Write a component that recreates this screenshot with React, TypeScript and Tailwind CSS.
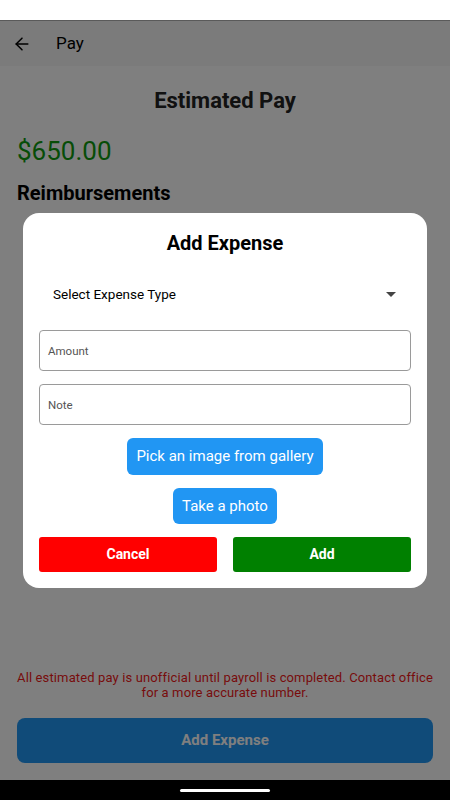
import { ArrowLeft } from 'lucide-react'

export default function App() {
  return (
    <div className="relative flex h-[800px] w-[450px] flex-col overflow-hidden bg-white font-['Roboto',sans-serif]">
      <div className="h-5 shrink-0 bg-white" />
      <div className="flex h-[46px] shrink-0 items-center border-t border-[#b4b4b4] bg-[#f6f6f6] pl-3">
        <ArrowLeft size={20} strokeWidth={1.8} className="text-black" />
        <span className="ml-6 text-[17px] text-black">Pay</span>
      </div>
      <div className="flex flex-1 flex-col px-[17px]">
        <h1 className="mt-[21px] text-center text-[22px] font-bold leading-[28px] text-[#222]">Estimated Pay</h1>
        <div className="mt-[19px] text-[26px] leading-[34px] text-[#0f9a0f]">$650.00</div>
        <h2 className="mt-[12px] text-[20px] font-bold leading-[26px] text-black">Reimbursements</h2>
        <div className="flex-1" />
        <p className="-mx-2 text-center text-[13px] leading-[15px] tracking-[0.13px] text-[#f01818]">
          All estimated pay is unofficial until payroll is completed. Contact office
          <br />
          for a more accurate number.
        </p>
        <button className="mb-[17px] mt-[18px] h-[45px] w-full rounded-lg bg-[#2196f3] text-[15px] font-bold text-white">
          Add Expense
        </button>
      </div>
      <div className="flex h-5 shrink-0 items-center justify-center bg-black">
        <div className="h-[3px] w-[90px] rounded-full bg-white" />
      </div>

      <div className="absolute inset-x-0 bottom-5 top-5 flex items-center justify-center bg-black/50">
        <div className="flex w-[404px] flex-col rounded-2xl bg-white px-4 pb-4 pt-[18px]">
          <h3 className="text-center text-[20px] font-bold leading-[24px] text-black">Add Expense</h3>
          <div className="mt-[28px] flex h-[24px] items-center justify-between pl-[14px] pr-[15px]">
            <span className="text-[13.5px] text-black">Select Expense Type</span>
            <svg width="10" height="5" viewBox="0 0 10 5">
              <path d="M0 0h10L5 5z" fill="#444" />
            </svg>
          </div>
          <div className="mt-[23px] flex h-[41px] items-center rounded border border-[#9a9a9a] px-2 pt-[3px] text-[11.5px] text-[#555]">
            Amount
          </div>
          <div className="mt-[13px] flex h-[41px] items-center rounded border border-[#9a9a9a] px-2 pt-[3px] text-[11.5px] text-[#555]">
            Note
          </div>
          <div className="mt-[13px] flex justify-center">
            <button className="h-[37px] rounded-md bg-[#2196f3] px-[9px] pt-[1px] text-[15px] text-white">
              Pick an image from gallery
            </button>
          </div>
          <div className="mt-[13px] flex justify-center">
            <button className="h-[36px] rounded-md bg-[#2196f3] px-[9px] pt-[1px] text-[15px] text-white">Take a photo</button>
          </div>
          <div className="mt-[13px] flex gap-4">
            <button className="h-[35px] flex-1 rounded-[3px] bg-[#ff0000] text-[14px] font-bold text-white">Cancel</button>
            <button className="h-[35px] flex-1 rounded-[3px] bg-[#008000] text-[14px] font-bold text-white">Add</button>
          </div>
        </div>
      </div>
    </div>
  )
}
